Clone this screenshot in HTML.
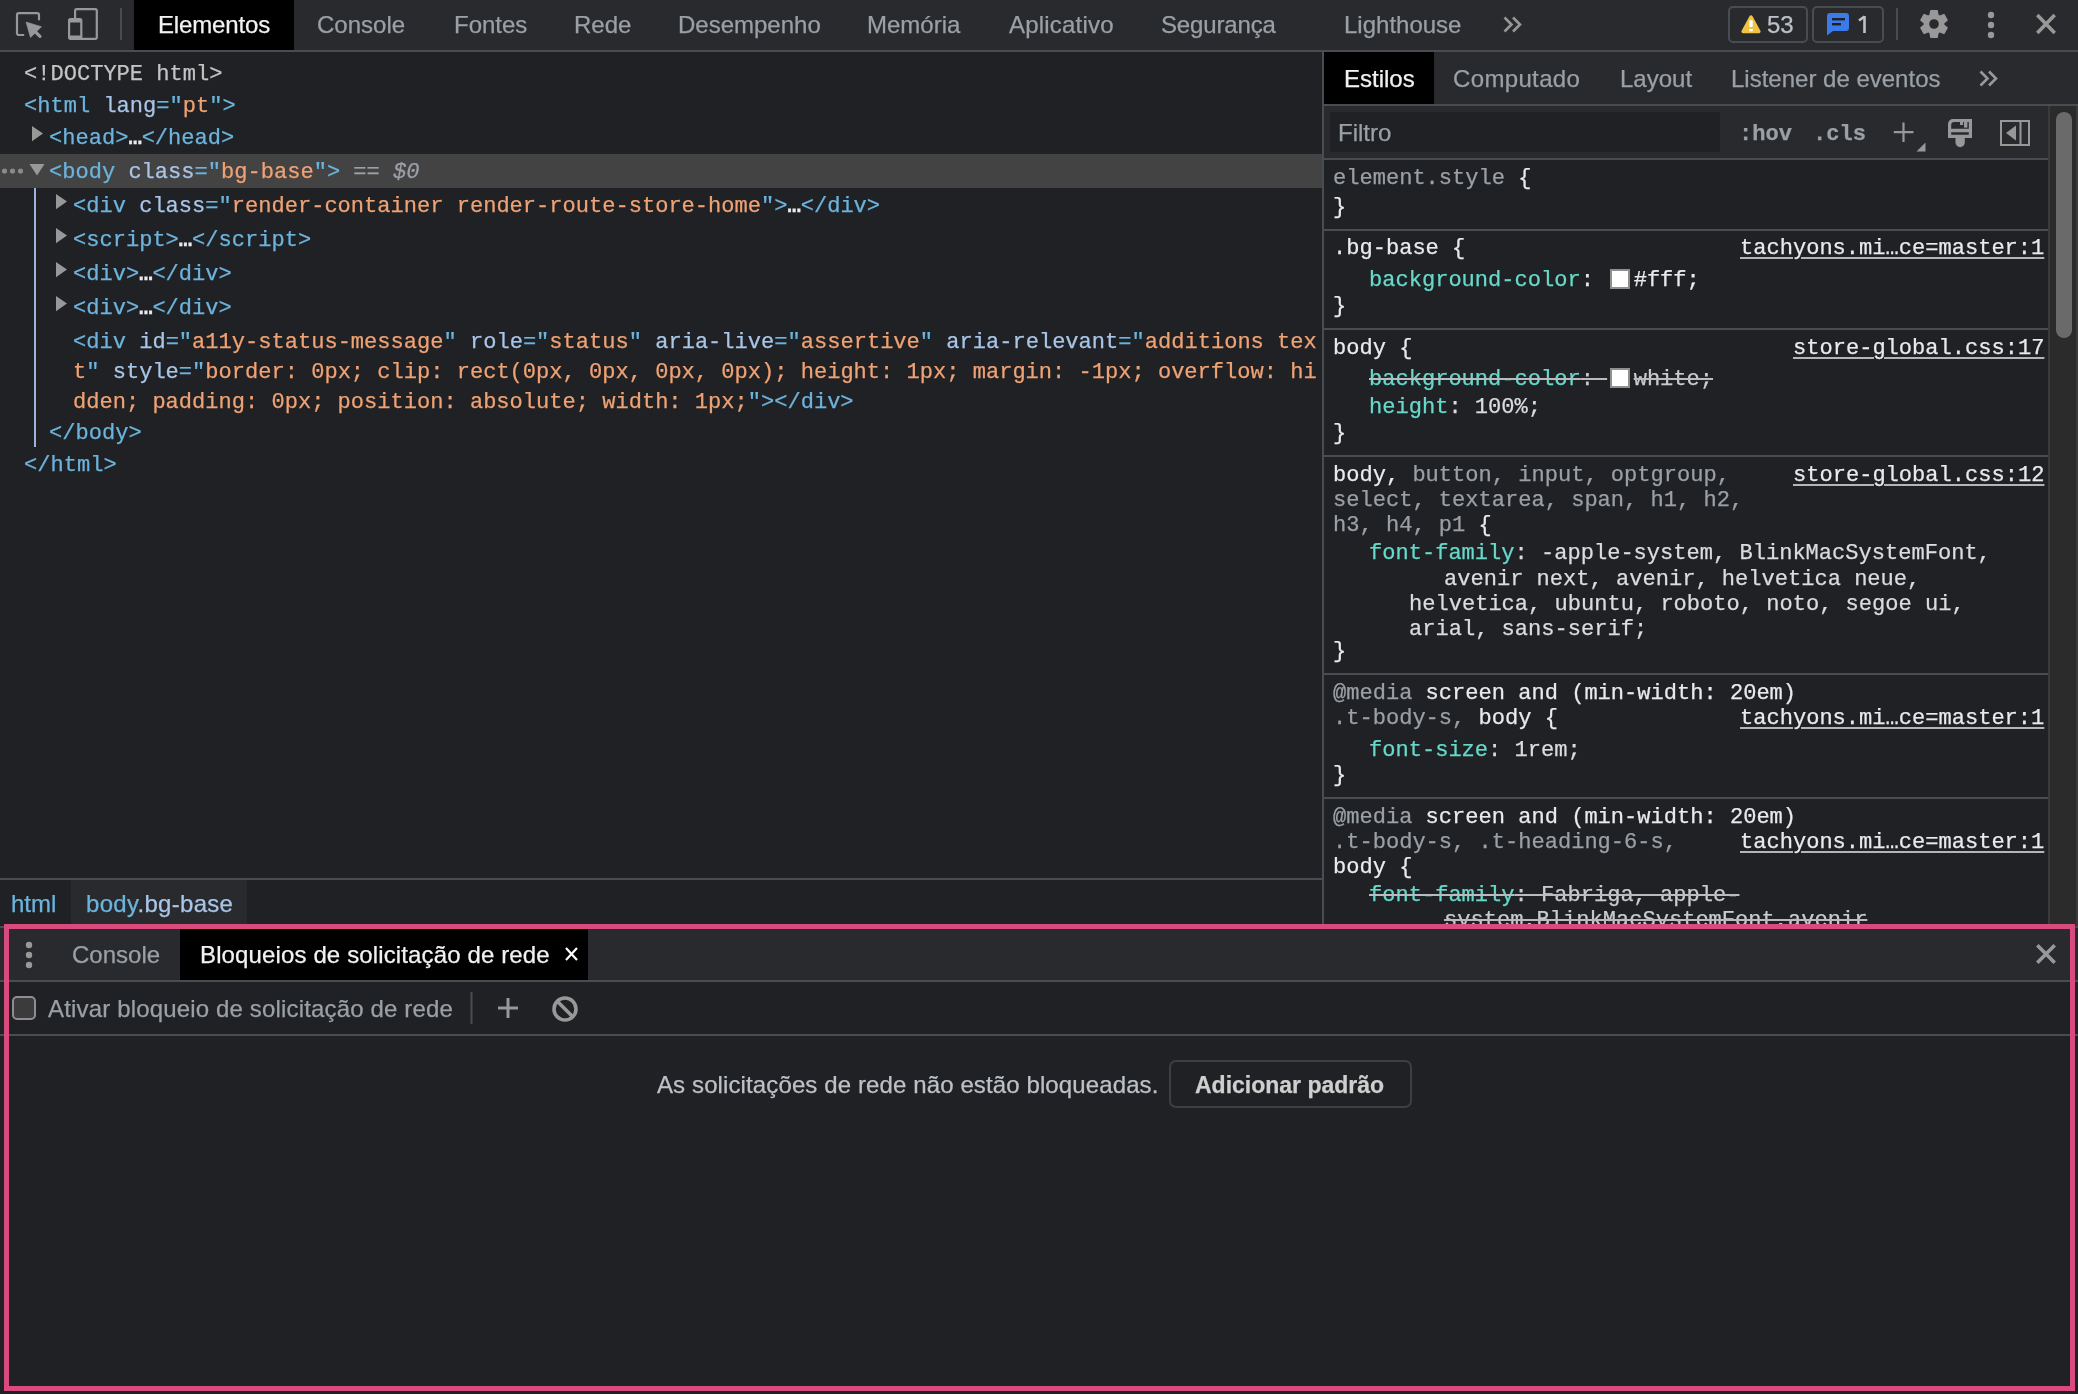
<!DOCTYPE html>
<html><head><meta charset="utf-8"><style>
*{margin:0;padding:0;box-sizing:border-box}
html,body{width:2078px;height:1394px;overflow:hidden;background:#202124}
body{position:relative}
body div{position:absolute}
.m,.s{will-change:transform;-webkit-text-stroke:0.25px currentColor}
.m{font-family:"Liberation Mono",monospace;font-size:22.06px;line-height:30px;white-space:pre;color:#e8eaed}
.s{font-family:"Liberation Sans",sans-serif;font-size:24px;line-height:30px;white-space:pre;color:#9aa0a6}
.tg{color:#6cb4dd}
.an{color:#a9c5e8}
.av{color:#efa274}
.dt{color:#c4c4c4}
.wh{color:#e8eaed}
.gr{color:#9aa0a6}
.pn{color:#66d9cb}
.pv{color:#e8eaed}
.el{color:#e8eaed}
.st{text-decoration:line-through;text-decoration-thickness:2px;text-decoration-color:#b9bbbe;color:#c9cbce}
.lk{text-decoration:underline;text-decoration-thickness:2px;text-decoration-color:#b5b5b5;text-underline-offset:3px;color:#e8eaed}
svg{position:absolute;overflow:visible}
</style></head>
<body>
<div style="left:0px;top:0px;width:2078px;height:50px;background:#292a2d;"></div>
<div style="left:0px;top:50px;width:2078px;height:2px;background:#494c50;"></div>
<div style="left:134px;top:0px;width:160px;height:50px;background:#000;"></div>
<svg style="left:0;top:0" width="140" height="50" viewBox="0 0 140 50">
<path d="M24.2 35 H18.8 a1.8 1.8 0 0 1 -1.8 -1.8 V15 a1.8 1.8 0 0 1 1.8 -1.8 H37.2 a1.8 1.8 0 0 1 1.8 1.8 V20.2" fill="none" stroke="#989898" stroke-width="2.2"/>
<path d="M26 22 L41.5 26.7 L30.5 37.6 Z" fill="#989898" stroke="#989898" stroke-width="0.6" stroke-linejoin="round"/>
<path d="M33.5 30 L40 36.3" stroke="#989898" stroke-width="3.2" stroke-linecap="round"/>
<rect x="75.1" y="9.1" width="21.7" height="29.7" rx="1.6" fill="none" stroke="#989898" stroke-width="2.2"/>
<rect x="69.1" y="19.2" width="12.2" height="19.6" rx="1.6" fill="#292a2d" stroke="#989898" stroke-width="2.2"/>
<rect x="68.6" y="18.6" width="13.2" height="3.8" rx="1.4" fill="#989898"/>
<rect x="68.6" y="35.4" width="13.2" height="4" rx="1.4" fill="#989898"/>
<rect x="120" y="8" width="2" height="32" fill="#494c50"/>
</svg>
<div class="s" style="left:158px;top:10px;color:#f2f2f2;letter-spacing:-0.15px">Elementos</div>
<div class="s" style="left:317px;top:10px;color:#9aa0a6">Console</div>
<div class="s" style="left:453.5px;top:10px;color:#9aa0a6">Fontes</div>
<div class="s" style="left:573.5px;top:10px;color:#9aa0a6">Rede</div>
<div class="s" style="left:677.5px;top:10px;color:#9aa0a6">Desempenho</div>
<div class="s" style="left:867px;top:10px;color:#9aa0a6">Memória</div>
<div class="s" style="left:1008.5px;top:10px;color:#9aa0a6;letter-spacing:0.2px">Aplicativo</div>
<div class="s" style="left:1161px;top:10px;color:#9aa0a6;letter-spacing:-0.15px">Segurança</div>
<div class="s" style="left:1344px;top:10px;color:#9aa0a6">Lighthouse</div>
<svg style="left:1503px;top:16px" width="20" height="18" viewBox="0 0 20 18">
<path d="M1.5 1.5 L8.5 8.5 L1.5 15.5 M10 1.5 L17 8.5 L10 15.5" fill="none" stroke="#989898" stroke-width="2.6"/></svg>
<svg style="left:1700px;top:0" width="378" height="50" viewBox="1700 0 378 50">
<rect x="1729" y="7" width="78" height="35" rx="4" fill="none" stroke="#494c50" stroke-width="2"/>
<rect x="1813" y="7" width="70" height="35" rx="4" fill="none" stroke="#494c50" stroke-width="2"/>
<path d="M1751 16.8 L1759 31.6 L1743 31.6 Z" fill="#f0c245" stroke="#f0c245" stroke-width="3.2" stroke-linejoin="round"/>
<rect x="1749.3" y="20.3" width="3.4" height="6.8" rx="1" fill="#fff"/>
<rect x="1749.3" y="29" width="3.4" height="2.3" fill="#fff"/>
<path d="M1864.5 16 V33 M1864.5 16.5 L1859 20.5" stroke="#bdc1c6" stroke-width="2.6" fill="none"/>
<path d="M1830 13 H1846 a3 3 0 0 1 3 3 V28 a3 3 0 0 1 -3 3 H1833 L1827 35.5 V16 a3 3 0 0 1 3 -3 Z" fill="#3b7ae8"/>
<rect x="1832" y="18" width="13" height="2.4" fill="#202124"/>
<rect x="1832" y="23" width="9" height="2.4" fill="#202124"/>
<rect x="1896" y="8" width="2" height="32" fill="#494c50"/>
<path d="M1929.40 14.78 L1930.30 10.00 L1937.70 10.00 L1938.60 14.78 A10.30 10.30 0 0 1 1939.68 15.41 L1944.27 13.80 L1947.97 20.20 L1944.28 23.38 A10.30 10.30 0 0 1 1944.28 24.62 L1947.97 27.80 L1944.27 34.20 L1939.68 32.59 A10.30 10.30 0 0 1 1938.60 33.22 L1937.70 38.00 L1930.30 38.00 L1929.40 33.22 A10.30 10.30 0 0 1 1928.32 32.59 L1923.73 34.20 L1920.03 27.80 L1923.72 24.62 A10.30 10.30 0 0 1 1923.72 23.38 L1920.03 20.20 L1923.73 13.80 L1928.32 15.41 A10.30 10.30 0 0 1 1929.40 14.78 Z M1934.00 19.20 A4.80 4.80 0 1 0 1934.00 28.80 A4.80 4.80 0 1 0 1934.00 19.20 Z" fill="#989898" fill-rule="evenodd"/>
<circle cx="1991" cy="15" r="3.2" fill="#989898"/>
<circle cx="1991" cy="25" r="3.2" fill="#989898"/>
<circle cx="1991" cy="35" r="3.2" fill="#989898"/>
<path d="M2037.3 15.1 L2054.7 32.9 M2054.7 15.1 L2037.3 32.9" stroke="#989898" stroke-width="3.6"/>
</svg>
<div class="s" style="left:1767px;top:10px;color:#bdc1c6">53</div>
<div style="left:0px;top:154px;width:1322px;height:34px;background:#434343;"></div>
<svg style="left:0;top:160px" width="50" height="24" viewBox="0 160 50 24">
<circle cx="4.5" cy="171" r="2.6" fill="#8a8a8a"/><circle cx="12.5" cy="171" r="2.6" fill="#8a8a8a"/><circle cx="20.5" cy="171" r="2.6" fill="#8a8a8a"/>
<path d="M29.5 164 H44.5 L37 175.5 Z" fill="#989898"/>
</svg>
<svg style="left:32px;top:126.3px" width="12" height="16" viewBox="0 0 12 16"><path d="M0 0 L11 7.6 L0 15.2 Z" fill="#989898"/></svg>
<svg style="left:56px;top:194.4px" width="12" height="16" viewBox="0 0 12 16"><path d="M0 0 L11 7.6 L0 15.2 Z" fill="#989898"/></svg>
<svg style="left:56px;top:228.4px" width="12" height="16" viewBox="0 0 12 16"><path d="M0 0 L11 7.6 L0 15.2 Z" fill="#989898"/></svg>
<svg style="left:56px;top:262.4px" width="12" height="16" viewBox="0 0 12 16"><path d="M0 0 L11 7.6 L0 15.2 Z" fill="#989898"/></svg>
<svg style="left:56px;top:296.4px" width="12" height="16" viewBox="0 0 12 16"><path d="M0 0 L11 7.6 L0 15.2 Z" fill="#989898"/></svg>
<div style="left:34px;top:188px;width:1.5px;height:259px;background:#9ab4dc;"></div>
<div class="m" style="left:24px;top:60px;"><span class="dt">&lt;!DOCTYPE html&gt;</span></div>
<div class="m" style="left:24px;top:92px;"><span class="tg">&lt;html</span> <span class="an">lang</span><span class="tg">=</span><span class="tg">"</span><span class="av">pt</span><span class="tg">"</span><span class="tg">&gt;</span></div>
<div class="m" style="left:48.5px;top:124px;"><span class="tg">&lt;head&gt;</span><span class="wh" style="font-weight:bold">…</span><span class="tg">&lt;/head&gt;</span></div>
<div class="m" style="left:48.5px;top:158px;"><span class="tg">&lt;body</span> <span class="an">class</span><span class="tg">=</span><span class="tg">"</span><span class="av">bg-base</span><span class="tg">"</span><span class="tg">&gt;</span><span class="gr"> == </span><span class="gr" style="font-style:italic">$0</span></div>
<div class="m" style="left:72.5px;top:192px;"><span class="tg">&lt;div</span> <span class="an">class</span><span class="tg">=</span><span class="tg">"</span><span class="av">render-container render-route-store-home</span><span class="tg">"</span><span class="tg">&gt;</span><span class="wh" style="font-weight:bold">…</span><span class="tg">&lt;/div&gt;</span></div>
<div class="m" style="left:72.5px;top:226px;"><span class="tg">&lt;script&gt;</span><span class="wh" style="font-weight:bold">…</span><span class="tg">&lt;/script&gt;</span></div>
<div class="m" style="left:72.5px;top:260px;"><span class="tg">&lt;div&gt;</span><span class="wh" style="font-weight:bold">…</span><span class="tg">&lt;/div&gt;</span></div>
<div class="m" style="left:72.5px;top:294px;"><span class="tg">&lt;div&gt;</span><span class="wh" style="font-weight:bold">…</span><span class="tg">&lt;/div&gt;</span></div>
<div class="m" style="left:72.5px;top:328px;"><span class="tg">&lt;div</span> <span class="an">id</span><span class="tg">=</span><span class="tg">"</span><span class="av">a11y-status-message</span><span class="tg">"</span> <span class="an">role</span><span class="tg">=</span><span class="tg">"</span><span class="av">status</span><span class="tg">"</span> <span class="an">aria-live</span><span class="tg">=</span><span class="tg">"</span><span class="av">assertive</span><span class="tg">"</span> <span class="an">aria-relevant</span><span class="tg">=</span><span class="tg">"</span><span class="av">additions tex</span></div>
<div class="m" style="left:72.5px;top:358px;"><span class="av">t</span><span class="tg">"</span> <span class="an">style</span><span class="tg">=</span><span class="tg">"</span><span class="av">border: 0px; clip: rect(0px, 0px, 0px, 0px); height: 1px; margin: -1px; overflow: hi</span></div>
<div class="m" style="left:72.5px;top:388px;"><span class="av">dden; padding: 0px; position: absolute; width: 1px;</span><span class="tg">"</span><span class="tg">&gt;&lt;/div&gt;</span></div>
<div class="m" style="left:48.5px;top:419px;"><span class="tg">&lt;/body&gt;</span></div>
<div class="m" style="left:24px;top:451px;"><span class="tg">&lt;/html&gt;</span></div>
<div style="left:0px;top:878px;width:1322px;height:2px;background:#494c50;"></div>
<div style="left:71px;top:880px;width:176px;height:46px;background:#292a2d;"></div>
<div class="s" style="left:10.5px;top:889px;"><span style="color:#6cb4dd">html</span></div>
<div class="s" style="left:85.5px;top:889px;"><span style="letter-spacing:0.3px"><span style="color:#6cb4dd">body</span><span style="color:#a9c5e8">.bg-base</span></span></div>
<div style="left:1322px;top:52px;width:2px;height:874px;background:#494c50;"></div>
<div style="left:1324px;top:52px;width:754px;height:52px;background:#292a2d;"></div>
<div style="left:1324px;top:52px;width:110px;height:52px;background:#000;"></div>
<div style="left:1324px;top:104px;width:754px;height:2px;background:#494c50;"></div>
<div class="s" style="left:1344px;top:64px;color:#f2f2f2">Estilos</div>
<div class="s" style="left:1453px;top:64px;letter-spacing:0.35px">Computado</div>
<div class="s" style="left:1619.5px;top:64px;">Layout</div>
<div class="s" style="left:1731px;top:64px;">Listener de eventos</div>
<svg style="left:1979px;top:69.5px" width="20" height="18" viewBox="0 0 20 18">
<path d="M1.5 1.5 L8.5 8.5 L1.5 15.5 M10 1.5 L17 8.5 L10 15.5" fill="none" stroke="#989898" stroke-width="2.6"/></svg>
<div style="left:1324px;top:106px;width:724px;height:52px;background:#292a2d;"></div>
<div style="left:1330px;top:112px;width:390px;height:40px;background:#202124;"></div>
<div class="s" style="left:1338px;top:118px;color:#9aa0a6">Filtro</div>
<div class="m" style="left:1739px;top:120px;color:#9aa0a6"><span style="font-weight:bold">:hov</span></div>
<div class="m" style="left:1812.5px;top:120px;color:#9aa0a6"><span style="font-weight:bold">.cls</span></div>
<svg style="left:1880px;top:106px" width="168" height="52" viewBox="1880 106 168 52">
<path d="M1903.5 122.5 V142 M1893.8 132.2 H1913.5" stroke="#989898" stroke-width="2.2"/>
<path d="M1925.5 142.5 V151.5 H1916.5 Z" fill="#989898"/>
<path d="M1948 138 V124 a5 5 0 0 1 5 -5 H1972 V138 Z M1951.2 128.8 V125 a3 3 0 0 1 3 -3 H1968.8 V128.8 Z M1951.2 132.2 H1968.8 V134.7 H1951.2 Z" fill="#989898" fill-rule="evenodd"/>
<rect x="1960" y="121" width="3.1" height="4" fill="#989898"/>
<rect x="1964" y="121" width="3.4" height="6.6" fill="#989898"/>
<path d="M1955.5 137 H1964.8 V142.5 a4.65 4.65 0 0 1 -9.3 0 Z" fill="#989898"/>
<rect x="2001" y="121" width="28" height="24" fill="none" stroke="#989898" stroke-width="2"/>
<rect x="2019.5" y="121" width="2" height="24" fill="#989898"/>
<path d="M2016 125.5 V140.5 L2006 133 Z" fill="#989898"/>
</svg>
<div style="left:1324px;top:158px;width:724px;height:2px;background:#494c50;"></div>
<div style="left:2048px;top:106px;width:30px;height:820px;background:#2b2b2b;"></div>
<div style="left:2048px;top:106px;width:2px;height:820px;background:#3a3a3a;"></div>
<div style="left:2056px;top:112px;width:16px;height:226px;background:#6a6a6a;border-radius:8px"></div>
<div style="left:2076px;top:106px;width:2px;height:820px;background:#3a3a3a;"></div>
<div style="left:1324px;top:229px;width:724px;height:2px;background:#494c50;"></div>
<div style="left:1324px;top:328px;width:724px;height:2px;background:#494c50;"></div>
<div style="left:1324px;top:455px;width:724px;height:2px;background:#494c50;"></div>
<div style="left:1324px;top:673px;width:724px;height:2px;background:#494c50;"></div>
<div style="left:1324px;top:797px;width:724px;height:2px;background:#494c50;"></div>
<div class="m" style="left:1332.5px;top:164px;"><span class="gr">element.style</span> <span class="el">{</span></div>
<div class="m" style="left:1332.5px;top:193px;">}</div>
<div class="m" style="left:1332.5px;top:234px;">.bg-base {</div>
<div class="m" style="right:34px;top:234px"><span class="lk">tachyons.mi…ce=master:1</span></div>
<div class="m" style="left:1369px;top:266px;"><span class="pn">background-color</span>: <span style="display:inline-block;width:26.5px"></span>#fff;</div>
<div style="left:1610px;top:269px;width:20px;height:20px;background:#8f8f8f;border:2px solid #8f8f8f;box-shadow:inset 0 0 0 20px #fff;background-clip:border-box"></div>
<div class="m" style="left:1332.5px;top:291.5px;">}</div>
<div class="m" style="left:1332.5px;top:334px;">body {</div>
<div class="m" style="right:34px;top:334px"><span class="lk">store-global.css:17</span></div>
<div class="m" style="left:1369px;top:365px;"><span class="st"><span class="pn">background-color</span>: <span style="display:inline-block;width:26.5px"></span>white;</span></div>
<div style="left:1610px;top:368px;width:20px;height:20px;background:#8f8f8f;border:2px solid #8f8f8f;box-shadow:inset 0 0 0 20px #fff;background-clip:border-box"></div>
<div class="m" style="left:1369px;top:392.5px;color:#dadcdf"><span class="pn">height</span>: 100%;</div>
<div class="m" style="left:1332.5px;top:419px;">}</div>
<div class="m" style="left:1332.5px;top:461px;">body, <span class="gr">button, input, optgroup,</span></div>
<div class="m" style="right:34px;top:461px"><span class="lk">store-global.css:12</span></div>
<div class="m" style="left:1332.5px;top:485.5px;"><span class="gr">select, textarea, span, h1, h2,</span></div>
<div class="m" style="left:1332.5px;top:510.5px;"><span class="gr">h3, h4, p1</span> {</div>
<div class="m" style="left:1369px;top:539px;color:#dadcdf"><span class="pn">font-family</span>: -apple-system, BlinkMacSystemFont,</div>
<div class="m" style="left:1444px;top:564.5px;color:#dadcdf">avenir next, avenir, helvetica neue,</div>
<div class="m" style="left:1408.5px;top:589.5px;color:#dadcdf">helvetica, ubuntu, roboto, noto, segoe ui,</div>
<div class="m" style="left:1408.5px;top:614.5px;color:#dadcdf">arial, sans-serif;</div>
<div class="m" style="left:1332.5px;top:637px;">}</div>
<div class="m" style="left:1332.5px;top:679px;"><span class="gr">@media</span> screen and (min-width: 20em)</div>
<div class="m" style="left:1332.5px;top:704px;"><span class="gr">.t-body-s,</span> body {</div>
<div class="m" style="right:34px;top:704px"><span class="lk">tachyons.mi…ce=master:1</span></div>
<div class="m" style="left:1369px;top:736px;color:#dadcdf"><span class="pn">font-size</span>: 1rem;</div>
<div class="m" style="left:1332.5px;top:761px;">}</div>
<div class="m" style="left:1332.5px;top:802.5px;"><span class="gr">@media</span> screen and (min-width: 20em)</div>
<div class="m" style="left:1332.5px;top:828px;"><span class="gr">.t-body-s, .t-heading-6-s,</span></div>
<div class="m" style="right:34px;top:828px"><span class="lk">tachyons.mi…ce=master:1</span></div>
<div class="m" style="left:1332.5px;top:853px;">body {</div>
<div class="m" style="left:1369px;top:881px;"><span class="st"><span class="pn">font-family</span>: Fabriga, apple-</span></div>
<div class="m" style="left:1444px;top:906px;"><span class="st">system,BlinkMacSystemFont,avenir</span></div>
<div style="left:0px;top:926px;width:2078px;height:2px;background:#494c50;"></div>
<div style="left:0px;top:928px;width:2078px;height:52px;background:#292a2d;"></div>
<div style="left:180px;top:929px;width:408px;height:51px;background:#000;"></div>
<div style="left:0px;top:980px;width:2078px;height:2px;background:#494c50;"></div>
<div style="left:0px;top:982px;width:2078px;height:52px;background:#202124;"></div>
<div style="left:0px;top:1034px;width:2078px;height:2px;background:#494c50;"></div>
<div style="left:0px;top:1036px;width:2078px;height:358px;background:#202124;"></div>
<svg style="left:0;top:926px" width="2078" height="120" viewBox="0 926 2078 120">
<circle cx="29" cy="945" r="3.2" fill="#989898"/><circle cx="29" cy="955" r="3.2" fill="#989898"/><circle cx="29" cy="965" r="3.2" fill="#989898"/>
<path d="M566 948 L577 960 M577 948 L566 960" stroke="#ffffff" stroke-width="2.2"/>
<path d="M2037.3 945.3 L2054.7 962.7 M2054.7 945.3 L2037.3 962.7" stroke="#989898" stroke-width="3.6"/>
<rect x="13" y="997" width="22" height="22" rx="4" fill="#3b3b3b" stroke="#8e8e8e" stroke-width="2"/>
<rect x="470.5" y="992" width="2" height="32" fill="#494c50"/>
<path d="M508 998 V1018 M498 1008 H518" stroke="#989898" stroke-width="3"/>
<circle cx="565" cy="1009" r="11" fill="none" stroke="#989898" stroke-width="3.6"/>
<path d="M557.5 1001.5 L572.5 1016.5" stroke="#989898" stroke-width="3.6"/>
</svg>
<div class="s" style="left:71.5px;top:939.5px;">Console</div>
<div class="s" style="left:200px;top:939.5px;color:#f2f2f2;letter-spacing:0.13px">Bloqueios de solicitação de rede</div>
<div class="s" style="left:48px;top:994px;letter-spacing:0.16px">Ativar bloqueio de solicitação de rede</div>
<div class="s" style="left:657px;top:1070px;color:#bdc1c6;letter-spacing:0.115px">As solicitações de rede não estão bloqueadas.</div>
<div style="left:1169px;top:1060px;width:243px;height:48px;background:transparent;border:2px solid #3c3f43;border-radius:7px"></div>
<div class="s" style="left:1195px;top:1070px;color:#cfcfcf;font-weight:bold;font-size:23px">Adicionar padrão</div>
<div style="left:4px;top:924px;width:2071px;height:467px;background:transparent;border:5px solid #d94b7c"></div>
</body></html>
